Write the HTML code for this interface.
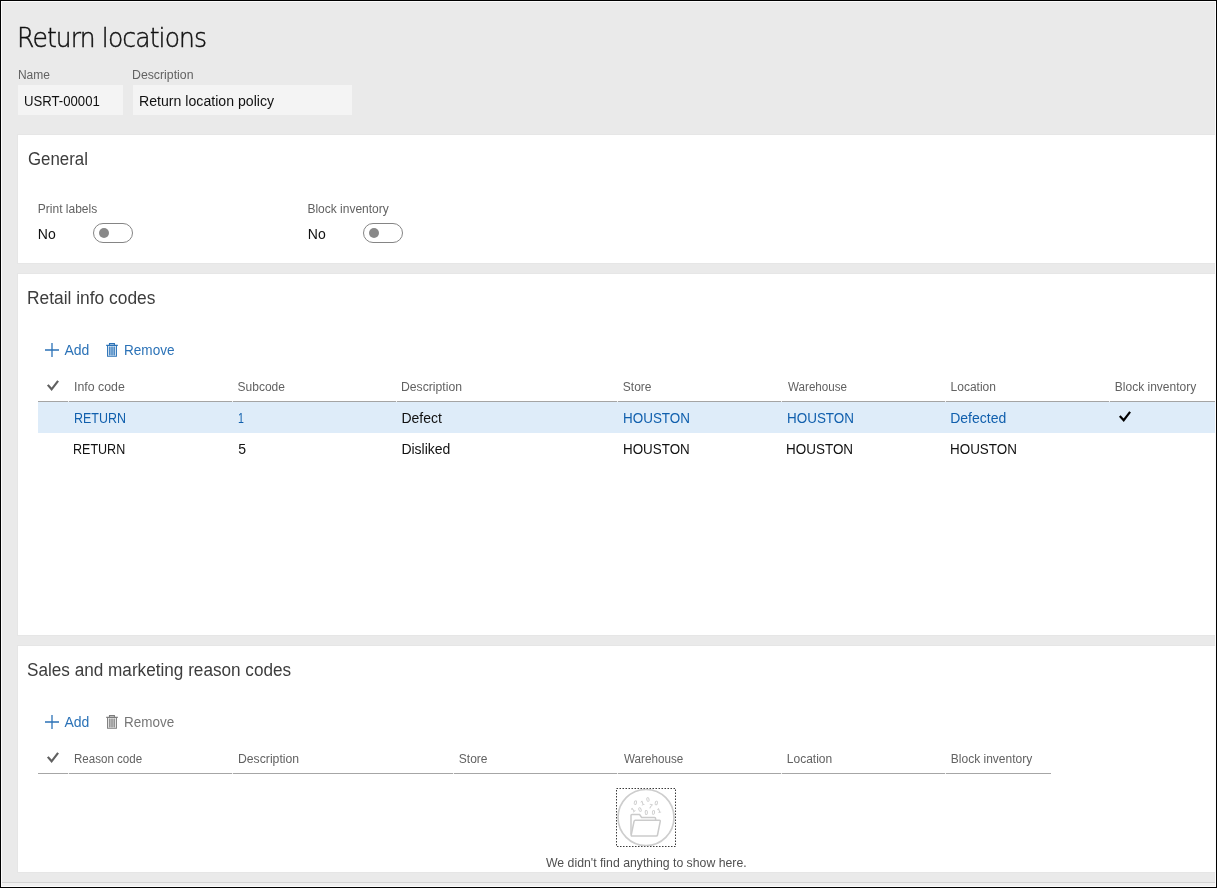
<!DOCTYPE html>
<html lang="en">
<head>
<meta charset="utf-8">
<title>Return locations</title>
<style>
html,body{margin:0;padding:0;}
body{width:1217px;height:888px;overflow:hidden;background:#eaeaea;font-family:"Liberation Sans",sans-serif;color:#000;position:relative;}
.abs{position:absolute;}
.t{position:absolute;white-space:nowrap;line-height:1;}
#frame{position:absolute;left:0;top:0;width:1215px;height:886px;border:1px solid #000;z-index:10;pointer-events:none;}
#frame2{position:absolute;left:1px;top:1px;width:1213px;height:884px;border:1px solid #fbfbfb;z-index:9;pointer-events:none;}
.panel{position:absolute;left:18px;width:1198px;background:#fff;box-shadow:0 0 0 1px #e6e6e6;}
.title{font-family:"DejaVu Sans","Liberation Sans",sans-serif;font-weight:200;font-size:27.2px;letter-spacing:-0.95px;color:#111;-webkit-text-stroke:0.45px #111;}
.lbl{font-size:12px;color:#626262;}
.val{font-size:14px;color:#111;}
.h2{font-size:18px;color:#3d3d3d;}
.inp{position:absolute;background:#f4f4f4;height:30px;}
.tog{position:absolute;width:38px;height:18px;border:1px solid #858585;border-radius:10px;background:#fff;}
.tog i{position:absolute;left:5px;top:4px;width:10px;height:10px;border-radius:50%;background:#888;}
.blue{color:#2b72b7;}
.gray{color:#767676;}
.lnk{color:#105fad;}
.hl{position:absolute;height:1px;background:#a4a4a4;}
.gap{position:absolute;width:1px;height:1px;background:#efefef;}
</style>
</head>
<body>
<div id="root" style="position:absolute;left:0;top:0;width:1217px;height:888px;will-change:transform;">
<!-- page title and header fields -->
<div class="t title" id="title" style="left:16.7px;transform:scaleX(0.920);transform-origin:0 0;top:24px;">Return locations</div>
<div class="t lbl" id="l_name" style="left:17.9px;top:69px;">Name</div>
<div class="t lbl" id="l_desc" style="left:132.4px;transform:scaleX(1.025);transform-origin:0 0;top:69px;">Description</div>
<div class="inp" style="left:18px;top:85px;width:105px;"></div>
<div class="inp" style="left:133px;top:85px;width:219px;"></div>
<div class="t val" id="v_name" style="left:23.6px;transform:scaleX(0.939);transform-origin:0 0;top:94px;">USRT-00001</div>
<div class="t val" id="v_desc" style="left:138.6px;transform:scaleX(1.009);transform-origin:0 0;top:94px;">Return location policy</div>

<!-- General -->
<div class="panel" style="top:135px;height:128px;"></div>
<div class="t h2" id="h_gen" style="left:28.0px;transform:scaleX(0.936);transform-origin:0 0;top:150px;">General</div>
<div class="t lbl" id="l_print" style="left:37.8px;top:203px;">Print labels</div>
<div class="t val" id="v_no1" style="left:37.8px;top:227px;">No</div>
<div class="tog" style="left:93px;top:223px;"><i></i></div>
<div class="t lbl" id="l_block" style="left:307.4px;top:203px;">Block inventory</div>
<div class="t val" id="v_no2" style="left:307.8px;top:227px;">No</div>
<div class="tog" style="left:363px;top:223px;"><i></i></div>

<!-- Retail info codes -->
<div class="panel" style="top:274px;height:361px;"></div>
<div class="t h2" id="h_ret" style="left:27.1px;transform:scaleX(0.965);transform-origin:0 0;top:289px;">Retail info codes</div>

<!-- toolbar 1 -->
<svg class="abs" style="left:44px;top:342px;" width="16" height="16" viewBox="0 0 16 16"><path d="M8 1v14M1 8h14" stroke="#2b72b7" stroke-width="1.3" fill="none"/></svg>
<div class="t val blue" id="b_add1" style="left:64.4px;top:343px;">Add</div>
<svg class="abs" style="left:105px;top:342px;" width="14" height="16" viewBox="0 0 14 16"><path d="M1.2 3.4h11.6M4.5 3.2V1.6h4.9V3.2M2.6 3.6v10.6h8.8V3.6" stroke="#2b72b7" stroke-width="1.1" fill="none"/><rect x="3.6" y="4.6" width="6.8" height="8.8" fill="#b9d2ea"/><path d="M4.8 4.6v8.8M7 4.6v8.8M9.2 4.6v8.8" stroke="#2b72b7" stroke-width="1.1" fill="none"/></svg>
<div class="t val blue" id="b_rem1" style="left:124.1px;transform:scaleX(0.969);transform-origin:0 0;top:343px;">Remove</div>

<!-- grid 1 -->
<svg class="abs" style="left:46px;top:379px;" width="14" height="13" viewBox="0 0 14 13"><path d="M1.8 5.9L5.6 10.3L12.1 1.9" stroke="#606060" stroke-width="2.2" fill="none"/></svg>
<div class="t lbl" id="g1h1" style="left:73.6px;transform:scaleX(1.028);transform-origin:0 0;top:381px;">Info code</div>
<div class="t lbl" id="g1h2" style="left:237.6px;top:381px;">Subcode</div>
<div class="t lbl" id="g1h3" style="left:401.4px;transform:scaleX(1.017);transform-origin:0 0;top:381px;">Description</div>
<div class="t lbl" id="g1h4" style="left:622.8px;top:381px;">Store</div>
<div class="t lbl" id="g1h5" style="left:787.5px;transform:scaleX(0.969);transform-origin:0 0;top:381px;">Warehouse</div>
<div class="t lbl" id="g1h6" style="left:950.6px;top:381px;">Location</div>
<div class="t lbl" id="g1h7" style="left:1114.8px;top:381px;">Block inventory</div>
<div class="hl" style="left:38px;top:401px;width:1177px;"></div>
<div class="gap" style="left:68px;top:401px;"></div><div class="gap" style="left:232px;top:401px;"></div><div class="gap" style="left:396px;top:401px;"></div><div class="gap" style="left:617px;top:401px;"></div><div class="gap" style="left:781px;top:401px;"></div><div class="gap" style="left:945px;top:401px;"></div><div class="gap" style="left:1109px;top:401px;"></div>
<div class="abs" style="left:38px;top:402px;width:1177px;height:31px;background:#deecf9;"></div>
<div class="t val lnk" id="r1c1" style="left:73.6px;transform:scaleX(0.890);transform-origin:0 0;top:411px;">RETURN</div>
<div class="t val lnk" id="r1c2" style="left:238.3px;transform:scaleX(0.756);transform-origin:0 0;top:411px;">1</div>
<div class="t val" id="r1c3" style="left:401.4px;top:411px;">Defect</div>
<div class="t val lnk" id="r1c4" style="left:622.5px;transform:scaleX(0.961);transform-origin:0 0;top:411px;">HOUSTON</div>
<div class="t val lnk" id="r1c5" style="left:786.5px;transform:scaleX(0.961);transform-origin:0 0;top:411px;">HOUSTON</div>
<div class="t val lnk" id="r1c6" style="left:950.2px;top:411px;">Defected</div>
<svg class="abs" style="left:1117px;top:409px;" width="15" height="14" viewBox="0 0 15 14"><path d="M2.8 6.9L6.7 11.2L13.1 2.9" stroke="#000" stroke-width="2.2" fill="none"/></svg>
<div class="t val" id="r2c1" style="left:73.4px;transform:scaleX(0.895);transform-origin:0 0;top:442px;">RETURN</div>
<div class="t val" id="r2c2" style="left:238.3px;top:442px;">5</div>
<div class="t val" id="r2c3" style="left:401.4px;top:442px;">Disliked</div>
<div class="t val" id="r2c4" style="left:622.6px;transform:scaleX(0.957);transform-origin:0 0;top:442px;">HOUSTON</div>
<div class="t val" id="r2c5" style="left:786.4px;transform:scaleX(0.962);transform-origin:0 0;top:442px;">HOUSTON</div>
<div class="t val" id="r2c6" style="left:950.4px;transform:scaleX(0.959);transform-origin:0 0;top:442px;">HOUSTON</div>

<!-- Sales and marketing reason codes -->
<div class="panel" style="top:646px;height:226px;"></div>
<div class="t h2" id="h_sal" style="left:27.3px;transform:scaleX(0.953);transform-origin:0 0;top:661px;">Sales and marketing reason codes</div>

<!-- toolbar 2 -->
<svg class="abs" style="left:44px;top:714px;" width="16" height="16" viewBox="0 0 16 16"><path d="M8 1v14M1 8h14" stroke="#2b72b7" stroke-width="1.3" fill="none"/></svg>
<div class="t val blue" id="b_add2" style="left:64.4px;top:715px;">Add</div>
<svg class="abs" style="left:105px;top:714px;" width="14" height="16" viewBox="0 0 14 16"><path d="M1.2 3.4h11.6M4.5 3.2V1.6h4.9V3.2M2.6 3.6v10.6h8.8V3.6" stroke="#7d7d7d" stroke-width="1.1" fill="none"/><rect x="3.6" y="4.6" width="6.8" height="8.8" fill="#d4d4d4"/><path d="M4.8 4.6v8.8M7 4.6v8.8M9.2 4.6v8.8" stroke="#7d7d7d" stroke-width="1.1" fill="none"/></svg>
<div class="t val gray" id="b_rem2" style="left:124.3px;transform:scaleX(0.962);transform-origin:0 0;top:715px;">Remove</div>

<!-- grid 2 -->
<svg class="abs" style="left:46px;top:751px;" width="14" height="13" viewBox="0 0 14 13"><path d="M1.8 5.9L5.6 10.3L12.1 1.9" stroke="#606060" stroke-width="2.2" fill="none"/></svg>
<div class="t lbl" id="g2h1" style="left:73.6px;transform:scaleX(0.964);transform-origin:0 0;top:753px;">Reason code</div>
<div class="t lbl" id="g2h2" style="left:237.6px;transform:scaleX(1.018);transform-origin:0 0;top:753px;">Description</div>
<div class="t lbl" id="g2h3" style="left:458.8px;top:753px;">Store</div>
<div class="t lbl" id="g2h4" style="left:623.6px;transform:scaleX(0.972);transform-origin:0 0;top:753px;">Warehouse</div>
<div class="t lbl" id="g2h5" style="left:786.8px;top:753px;">Location</div>
<div class="t lbl" id="g2h6" style="left:950.8px;top:753px;">Block inventory</div>
<div class="hl" style="left:38px;top:773px;width:1013px;background:#a6a6a6;"></div>
<div class="gap" style="left:68px;top:773px;"></div><div class="gap" style="left:232px;top:773px;"></div><div class="gap" style="left:453px;top:773px;"></div><div class="gap" style="left:617px;top:773px;"></div><div class="gap" style="left:781px;top:773px;"></div><div class="gap" style="left:945px;top:773px;"></div>
<svg class="abs" style="left:616px;top:788px;" width="60" height="59" viewBox="0 0 60 59" font-family="Liberation Sans, sans-serif" font-size="6.4" font-weight="bold" text-anchor="middle" fill="#cbcbcb">
<rect x="0.5" y="0.5" width="59" height="58" fill="none" stroke="#3a3a3a" stroke-width="1" stroke-dasharray="1.5 1.5"/>
<circle cx="30" cy="29.5" r="28" fill="none" stroke="#cdcdcd" stroke-width="1.7"/>
<path d="M15 46.5V27.6q0-1 1-1h7.6l2 2.8h13q1 0 1 1v1.6" fill="none" stroke="#cbcbcb" stroke-width="1.5"/>
<path d="M15.2 47l2.9-13.8q.2-1 1.2-1h24q1.200 0 .95 1.100l-2.75 13.700q-.2 1-1.200 1H16q-1 0-.8-1z" fill="#fff" stroke="#cbcbcb" stroke-width="1.5"/>
<text x="19.4" y="16.8" transform="rotate(18 19.4 14.5)">0</text>
<text x="26.4" y="17.3" transform="rotate(-20 26.4 15.0)">1</text>
<text x="32.0" y="13.7" transform="rotate(-8 32.0 11.4)">0</text>
<text x="40.2" y="17.3" transform="rotate(14 40.2 15.0)">0</text>
<text x="16.9" y="24.1" transform="rotate(-38 16.9 21.8)">1</text>
<text x="24.1" y="23.8" transform="rotate(-18 24.1 21.5)">0</text>
<text x="34.8" y="20.5" transform="rotate(15 34.8 18.2)">7</text>
<text x="30.3" y="26.6" transform="rotate(0 30.3 24.3)">0</text>
<text x="37.4" y="26.6" transform="rotate(12 37.4 24.3)">0</text>
<text x="43.0" y="24.7" transform="rotate(-18 43.0 22.4)">1</text>
</svg>
<div class="t lbl" id="empty" style="left:545.7px;transform:scaleX(1.007);transform-origin:0 0;top:856.5px;font-size:12.2px;color:#505050;">We didn't find anything to show here.</div>

<!-- bottom strip -->
<div class="abs" style="left:1px;top:882px;width:1214px;height:1px;background:#d4d4d4;"></div>
<div class="abs" style="left:1px;top:883px;width:1214px;height:3px;background:#f0f0f0;"></div>
<div id="frame2"></div>
<div id="frame"></div>
</div>
</body>
</html>
